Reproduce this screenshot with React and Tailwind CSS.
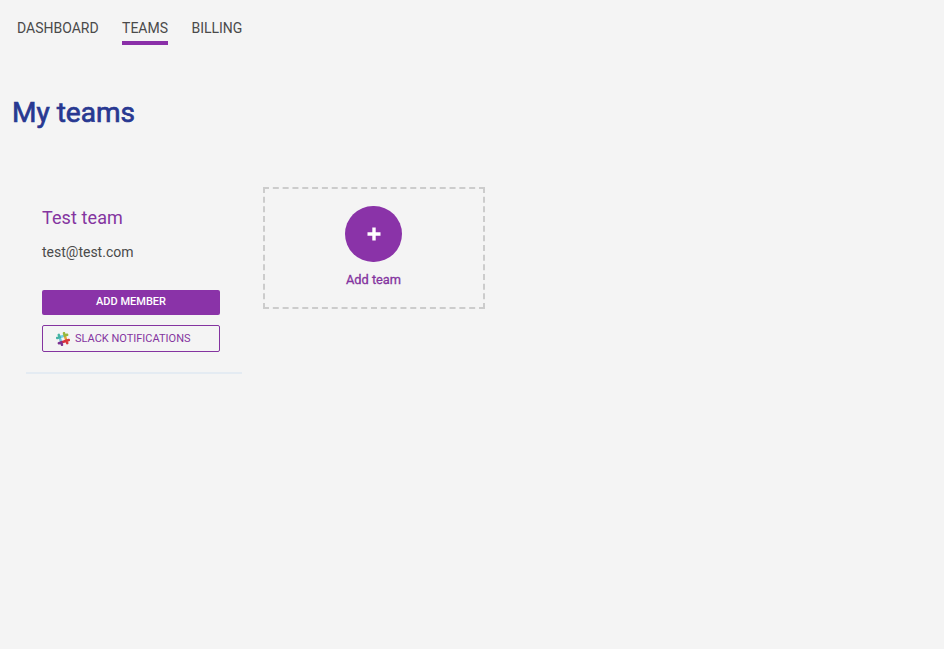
function SlackMark() {
  return (
    <svg viewBox="0 0 28 28" className="h-[14px] w-[14px] shrink-0" fill="none" strokeWidth="5" strokeLinecap="round">
      <g transform="rotate(-18 14 14)">
        <path d="M8.5 8.5h11" stroke="#6fd0ee" />
        <path d="M8.5 8.5v11" stroke="#6fc6dc" />
        <path d="M19.5 8.5v11" stroke="#e8a23a" />
        <path d="M8.5 19.5h11" stroke="#d9303f" />
        <path d="M3.5 8.5h5V3.5" stroke="#45b3a4" />
        <path d="M19.5 3.5v5h5" stroke="#96b83d" />
        <path d="M3.5 19.5h5v5" stroke="#7b3191" />
        <path d="M19.5 24.5v-5h5" stroke="#d8383b" />
      </g>
    </svg>
  );
}

const tabs = [
  { name: 'DASHBOARD', active: false },
  { name: 'TEAMS', active: true },
  { name: 'BILLING', active: false },
];

export default function App() {
  return (
    <div className="h-[649px] w-full overflow-hidden bg-[#f4f4f4] font-['Roboto',sans-serif] text-[#4a4a4a]">
      <nav className="flex gap-[23.4px] pl-[17px] pt-[15px]">
        {tabs.map((tab) => (
          <a
            key={tab.name}
            className={`h-[30px] whitespace-nowrap border-b-4 pt-[3px] text-[14px] leading-5 ${
              tab.active ? 'border-[#8a2fa8]' : 'border-transparent'
            }`}
          >
            {tab.name}
          </a>
        ))}
      </nav>

      <h1 className="mt-12 pl-3 text-[28px] font-normal leading-10 text-[#283891] [-webkit-text-stroke:0.7px_#283891]">My teams</h1>

      <main className="mt-[54px] flex items-start pl-[26px]">
        <section className="h-[187px] w-[216px] border-b-2 border-[#e4ebf2] px-4 pt-[19px]">
          <h2 className="text-[18px] leading-6 tracking-[0.1px] text-[#8434a0]">Test team</h2>
          <p className="mt-3 text-[14px] leading-5">test@test.com</p>
          <button className="mt-[28px] flex h-[25px] w-[178px] items-center justify-center rounded-[2px] bg-[#8a33a8] pb-px text-[11px] font-medium text-white">
            ADD MEMBER
          </button>
          <button className="mt-[10px] flex h-[27px] w-[178px] items-center gap-[5px] rounded-[2px] border border-[#8434a0] pl-[13px] text-[11px] text-[#8434a0]">
            <SlackMark />
            <span className="pt-px">SLACK NOTIFICATIONS</span>
          </button>
        </section>

        <button className="ml-[21px] flex h-[122px] w-[222px] flex-col items-center border-2 border-dashed border-[#cccccc] pr-px pt-[17px]">
          <span className="flex h-[56px] w-[57px] items-center justify-center rounded-full bg-[#8a33a8] pb-px">
            <svg viewBox="0 0 14 14" className="h-[14px] w-[14px]" fill="none" stroke="white" strokeWidth="3.4">
              <path d="M7 .5v13M.5 7h13" strokeLinejoin="round" />
            </svg>
          </span>
          <span className="mt-[8px] text-[12.8px] font-normal leading-5 text-[#8434a0] [-webkit-text-stroke:0.3px_#8434a0]">Add team</span>
        </button>
      </main>
    </div>
  );
}
